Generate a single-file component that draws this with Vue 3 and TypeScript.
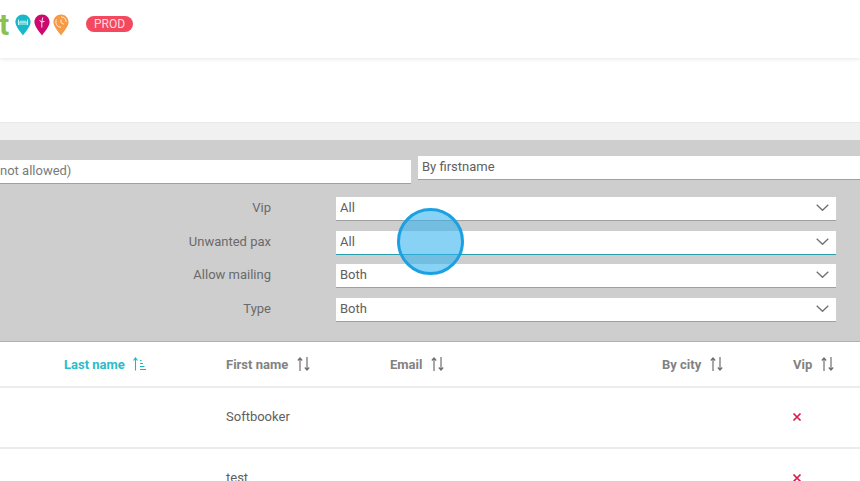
<script setup lang="ts">
interface Column {
  label: string;
  active?: boolean;
}

const pinShape =
  'M8 .5c4.200 0 7.600 3.400 7.600 7.600 0 4-4.600 9.500-7.600 13.400C5 17.600.4 12.100.4 8.100.4 3.900 3.800.5 8 .5z';

const filters = [
  { label: 'Vip', value: 'All', focused: false },
  { label: 'Unwanted pax', value: 'All', focused: true },
  { label: 'Allow mailing', value: 'Both', focused: false },
  { label: 'Type', value: 'Both', focused: false },
];

const columns: Column[] = [
  { label: 'Last name', active: true },
  { label: 'First name' },
  { label: 'Email' },
  { label: 'By city' },
  { label: 'Vip' },
];

const rows = ['Softbooker', 'test'];
</script>

<template>
  <div class="page">
    <header class="topbar">
      <span class="logo-letter">t</span>
      <div class="pins">
        <svg class="pin" viewBox="0 0 16 22">
          <path :d="pinShape" fill="#17b9c9" />
          <path d="M3.500 5.500v5.500M12.500 5.500v5.500M3.500 10h9M3.500 8.200h9M6 6.500v1.700M8 6.500v1.700M10 6.500v1.700" stroke="#fff" stroke-width=".8" fill="none" />
        </svg>
        <svg class="pin" viewBox="0 0 16 22">
          <path :d="pinShape" fill="#cc0a6e" />
          <path d="M8.800 3.500L7.800 8 5.500 6.500M7.800 8l2.700-.6M7.800 8v5.500" stroke="#fff" stroke-width=".9" fill="none" />
        </svg>
        <svg class="pin" viewBox="0 0 16 22">
          <path :d="pinShape" fill="#f79a45" />
          <path d="M8 2.800a5.200 5.200 0 0 1 5.200 5.200M8 5.500v3l3 1.800M3.500 5.500A5.200 5.200 0 0 0 8 13.200" stroke="#fff" stroke-width=".8" fill="none" />
        </svg>
      </div>
      <span class="env-badge">PROD</span>
    </header>

    <div class="subbar"></div>
    <div class="strip"></div>

    <section class="filter-panel">
      <div class="search-row">
        <div class="search-left">not allowed)</div>
        <div class="search-right">By firstname</div>
      </div>
      <div class="filter-rows">
        <div v-for="f in filters" :key="f.label" class="filter-row">
          <label class="filter-label">{{ f.label }}</label>
          <div class="select" :class="{ focused: f.focused }">
            <span>{{ f.value }}</span>
            <svg class="chevron" viewBox="0 0 13 7">
              <path d="M.7.7l5.800 5.600L12.300.7" fill="none" stroke="#6f6f6f" stroke-width="1.300" />
            </svg>
          </div>
        </div>
      </div>
    </section>

    <section class="table">
      <div class="thead grid">
        <div
          v-for="c in columns"
          :key="c.label"
          class="th"
          :class="{ active: c.active }"
        >
          <span>{{ c.label }}</span>
          <svg v-if="c.active" class="sort" viewBox="0 0 13 14">
            <path d="M2.500 13.500V1M.5 3.500l2-2.500 2 2.500" fill="none" stroke="#17b9c9" stroke-width="1.100" />
            <path d="M7 3.500h1.500M7 6.500h3M7 9.500h4.500M7 12.500h6" fill="none" stroke="#17b9c9" stroke-width="1" />
          </svg>
          <svg v-else class="sort" viewBox="0 0 13 14">
            <path d="M3 14V1M.8 3.500L3 1l2.200 2.500" fill="none" stroke="#6f6f6f" stroke-width="1.200" />
            <path d="M10 0v13M7.800 10.500L10 13l2.200-2.500" fill="none" stroke="#6f6f6f" stroke-width="1.200" />
          </svg>
        </div>
      </div>
      <div v-for="r in rows" :key="r" class="tr grid">
        <div class="cell-name">{{ r }}</div>
        <svg class="cross" viewBox="0 0 10 10">
          <path d="M1.500 1.500l7 7M8.500 1.500l-7 7" stroke="#d81b50" stroke-width="1.700" fill="none" />
        </svg>
      </div>
    </section>

    <div class="click-marker"></div>
  </div>
</template>

<style scoped>
.page {
  position: relative;
  width: 860px;
  height: 481px;
  overflow: hidden;
  background: #fff;
  font-family: Roboto, "Liberation Sans", sans-serif;
  font-size: 13px;
  color: #606060;
}

.topbar {
  position: relative;
  height: 58px;
  display: flex;
  align-items: flex-start;
  padding-top: 14px;
  box-sizing: border-box;
  box-shadow: 0 1px 4px rgba(0, 0, 0, 0.1);
}

.logo-letter {
  width: 15px;
  margin-left: -1px;
  font-size: 30px;
  line-height: 22px;
  font-weight: 700;
  color: #8cc152;
}

.pins {
  display: flex;
  gap: 3px;
  margin-left: 1px;
}

.pin {
  width: 16px;
  height: 22px;
}

.env-badge {
  margin-left: 17px;
  margin-top: 2px;
  width: 47px;
  height: 16px;
  border-radius: 8px;
  background: #f4485e;
  color: #fbdde0;
  font-size: 12px;
  line-height: 16px;
  text-align: center;
}

.subbar {
  height: 64px;
}

.strip {
  height: 18px;
  background: #f1f1f1;
  border-top: 1px solid #e9e9e9;
  box-sizing: border-box;
}

.filter-panel {
  height: 202px;
  background: #cecece;
  border-bottom: 1px solid #b0b0b0;
  box-sizing: border-box;
  padding-top: 16px;
}

.search-row {
  display: flex;
  align-items: flex-start;
  gap: 7px;
}

.search-left {
  width: 411px;
  height: 24px;
  margin-top: 4px;
  background: #fff;
  border-bottom: 1px solid #a0a0a0;
  box-sizing: border-box;
  line-height: 22px;
  color: #7a7a7a;
}

.search-right {
  flex: 1;
  height: 24px;
  background: #fff;
  border-bottom: 1px solid #a0a0a0;
  box-sizing: border-box;
  padding-left: 4px;
  line-height: 22px;
}

.filter-rows {
  display: flex;
  flex-direction: column;
  gap: 9.67px;
  margin-top: 13px;
}

.filter-row {
  display: flex;
  align-items: center;
  height: 24px;
}

.filter-label {
  width: 271px;
  padding-bottom: 3px;
  text-align: right;
  color: #6a6a6a;
}

.select {
  margin-left: 65px;
  width: 500px;
  height: 24px;
  background: #fff;
  border-bottom: 1px solid #a0a0a0;
  box-sizing: border-box;
  padding: 0 7px 2px 4px;
  display: flex;
  align-items: center;
  justify-content: space-between;
}

.select.focused {
  border-bottom-color: #2a9fab;
}

.chevron {
  width: 13px;
  height: 7px;
}

.grid {
  display: grid;
  grid-template-columns: 226px 164px 272px 131px 67px;
}

.thead {
  height: 44px;
  border-bottom: 2px solid #ececec;
  grid-template-columns: 64px 162px 164px 272px 131px 67px;
  box-sizing: content-box;
}

.th {
  display: flex;
  align-items: center;
  gap: 9px;
  font-weight: 700;
  font-size: 13px;
  color: #828282;
}

.th:first-child {
  grid-column: 2;
}

.th.active {
  gap: 8px;
  color: #2bbcc9;
}

.sort {
  width: 13px;
  height: 14px;
  flex: none;
}

.tr {
  height: 59px;
  align-items: center;
  border-bottom: 2px solid #ececec;
}

.cell-name {
  grid-column: 2;
  margin-bottom: 2px;
}

.cross {
  grid-column: 5;
  width: 10px;
  height: 10px;
  margin-bottom: 2px;
  margin-left: -1px;
}

.click-marker {
  position: absolute;
  left: 397px;
  top: 208px;
  width: 67px;
  height: 67px;
  box-sizing: border-box;
  border-radius: 50%;
  border: 3px solid #1ba1e2;
  background: rgba(50, 178, 240, 0.58);
}
</style>
